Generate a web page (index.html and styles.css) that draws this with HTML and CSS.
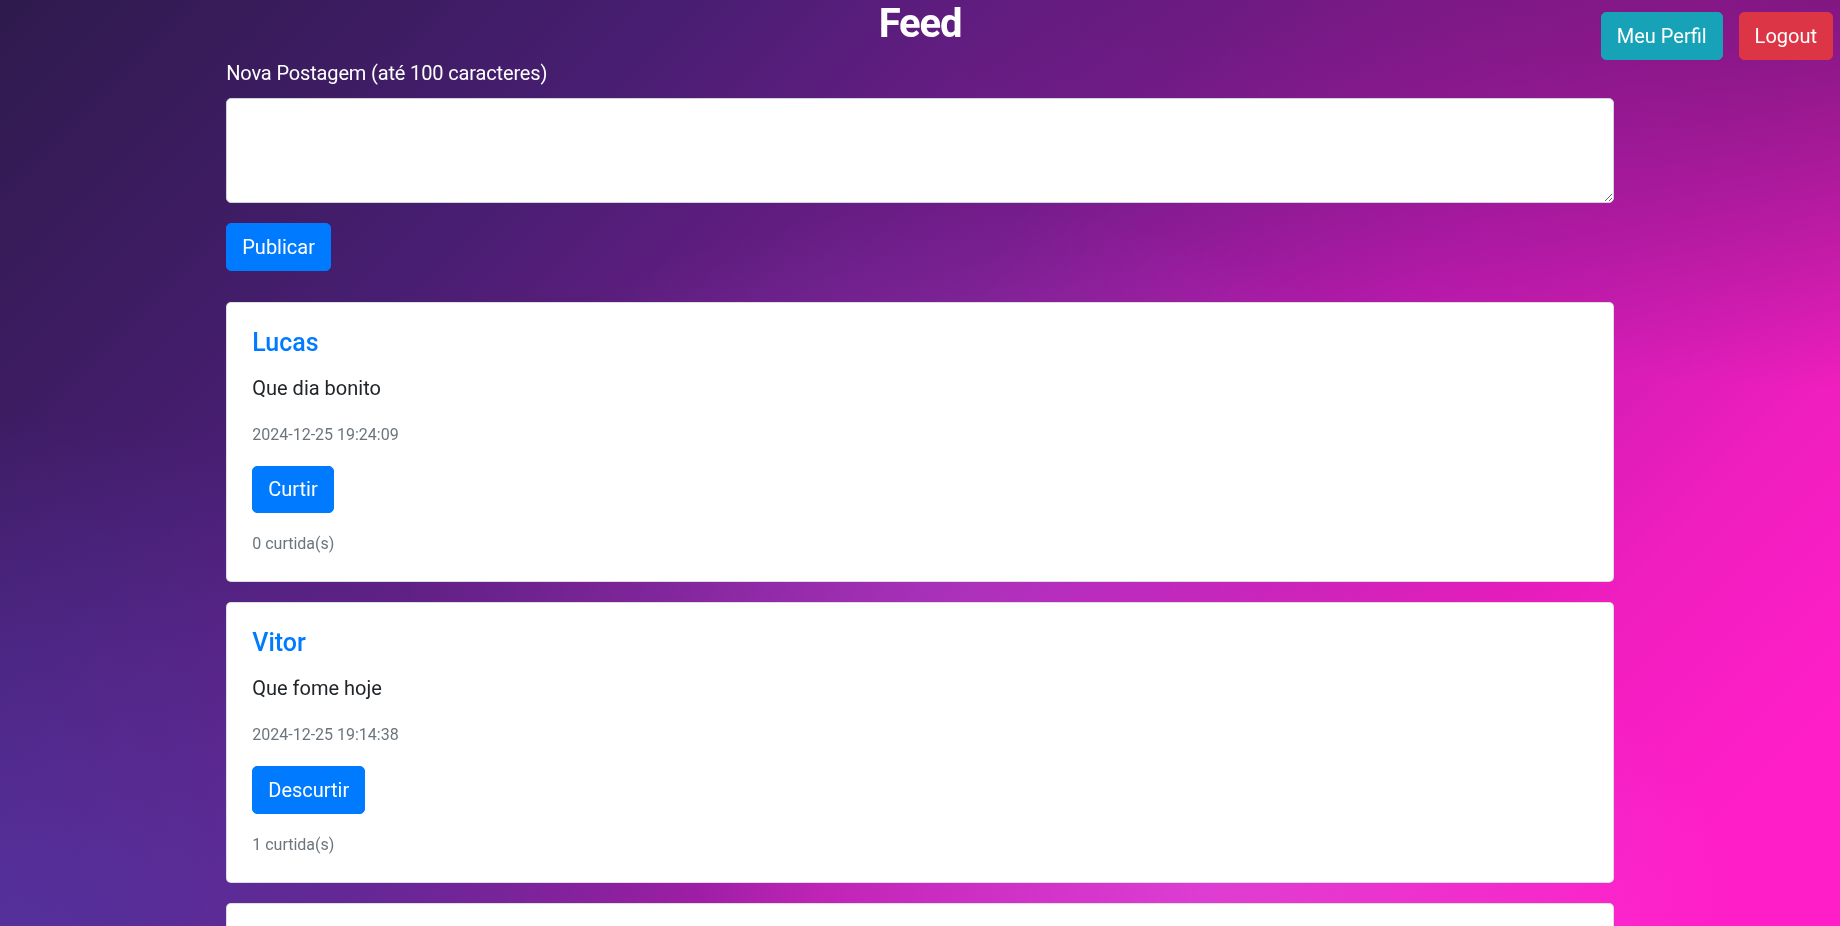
FILE: index.html
```html
<!DOCTYPE html>
<html lang="pt-BR">
<head>
<meta charset="utf-8">
<title>Feed</title>
<link rel="stylesheet" href="styles.css">
</head>
<body>
<div class="top-actions">
  <a class="btn btn-info" href="#">Meu Perfil</a>
  <a class="btn btn-danger" href="#">Logout</a>
</div>
<main class="container">
  <h1 class="page-title">Feed</h1>
  <form class="new-post">
    <div class="form-group">
      <label class="form-label" for="conteudo">Nova Postagem (até 100 caracteres)</label>
      <textarea id="conteudo" class="form-control" rows="3" maxlength="100"></textarea>
    </div>
    <button type="button" class="btn btn-primary">Publicar</button>
  </form>

  <section class="feed">
    <article class="card">
      <div class="card-body">
        <h5 class="card-title">Lucas</h5>
        <p class="card-text">Que dia bonito</p>
        <small class="muted post-date">2024-12-25 19:24:09</small>
        <button type="button" class="btn btn-primary">Curtir</button>
        <small class="muted post-likes">0 curtida(s)</small>
      </div>
    </article>
    <article class="card">
      <div class="card-body">
        <h5 class="card-title">Vitor</h5>
        <p class="card-text">Que fome hoje</p>
        <small class="muted post-date">2024-12-25 19:14:38</small>
        <button type="button" class="btn btn-primary">Descurtir</button>
        <small class="muted post-likes">1 curtida(s)</small>
      </div>
    </article>
    <article class="card card-next">
      <div class="card-body"></div>
    </article>
  </section>
</main>
</body>
</html>
```

FILE: styles.css
```css
html {
  scrollbar-width: none;
}

html::-webkit-scrollbar {
  display: none;
}

body {
  margin: 0;
  font-family: Roboto, "Liberation Sans", Arial, sans-serif;
  font-size: 20px;
  line-height: 1.5;
  color: #212529;
  background-color: #4a1f78;
  min-height: 100vh;
}

body::before {
  content: "";
  position: fixed;
  inset: 0;
  z-index: -1;
  background:
    radial-gradient(ellipse 30% 40% at 52% 62%, rgba(190, 110, 255, 0.28), rgba(190, 110, 255, 0) 100%),
    radial-gradient(ellipse 28% 30% at 66% 96%, rgba(210, 120, 255, 0.35), rgba(210, 120, 255, 0) 100%),
    radial-gradient(ellipse 45% 55% at 0% 100%, rgba(84, 50, 158, 0.92), rgba(84, 50, 158, 0) 100%),
    radial-gradient(ellipse 50% 42% at 100% 0%, rgba(70, 20, 90, 0.55), rgba(70, 20, 90, 0) 100%),
    linear-gradient(135deg, #2e1a4c 0%, #481e72 25%, #761c8c 45%, #bd1aae 62%, #ef1ebe 80%, #ff1ec8 92%);
}

.top-actions {
  position: absolute;
  top: 12px;
  right: 7px;
  display: flex;
  gap: 16px;
}

.container {
  max-width: 1425px;
  margin: 0 auto;
  padding: 0 18.75px;
  box-sizing: border-box;
}

.page-title {
  margin: 0 0 10px;
  font-size: 40px;
  line-height: 48px;
  font-weight: 700;
  letter-spacing: -1.2px;
  text-align: center;
  color: #fff;
}

.form-group {
  margin-bottom: 20px;
}

.form-label {
  display: block;
  margin-bottom: 10px;
  color: #fff;
  letter-spacing: -0.15px;
}

.form-control {
  display: block;
  width: 100%;
  box-sizing: border-box;
  height: 105px;
  padding: 7.5px 15px;
  font: inherit;
  color: #495057;
  background: #fff;
  border: 1.25px solid #ced4da;
  border-radius: 5px;
  resize: vertical;
}

.btn {
  display: inline-block;
  box-sizing: border-box;
  height: 47.5px;
  padding: 7.5px 15px;
  font: inherit;
  font-size: 20px;
  line-height: 30px;
  color: #fff;
  text-decoration: none;
  border: 1.25px solid transparent;
  border-radius: 5px;
  cursor: pointer;
}

.btn-primary {
  background: #007bff;
  border-color: #007bff;
}

.btn-info {
  background: #17a2b8;
  border-color: #17a2b8;
}

.btn-danger {
  background: #dc3545;
  border-color: #dc3545;
}

.feed {
  margin-top: 31px;
}

.card {
  background: #fff;
  border: 1.25px solid rgba(0, 0, 0, 0.125);
  border-radius: 5px;
  margin-bottom: 20px;
}

.card-body {
  padding: 25px;
  display: flex;
  flex-direction: column;
  align-items: flex-start;
}

.card-next .card-body {
  min-height: 230px;
}

.card-title {
  margin: 0 0 15px;
  font-size: 25px;
  line-height: 30px;
  font-weight: 500;
  color: #007bff;
}

.card-text {
  margin: 0 0 20px;
}

.muted {
  display: block;
  font-size: 16px;
  line-height: 24px;
  color: #6c757d;
}

.post-date {
  margin-bottom: 19px;
}

.post-likes {
  margin-top: 19px;
}
```
